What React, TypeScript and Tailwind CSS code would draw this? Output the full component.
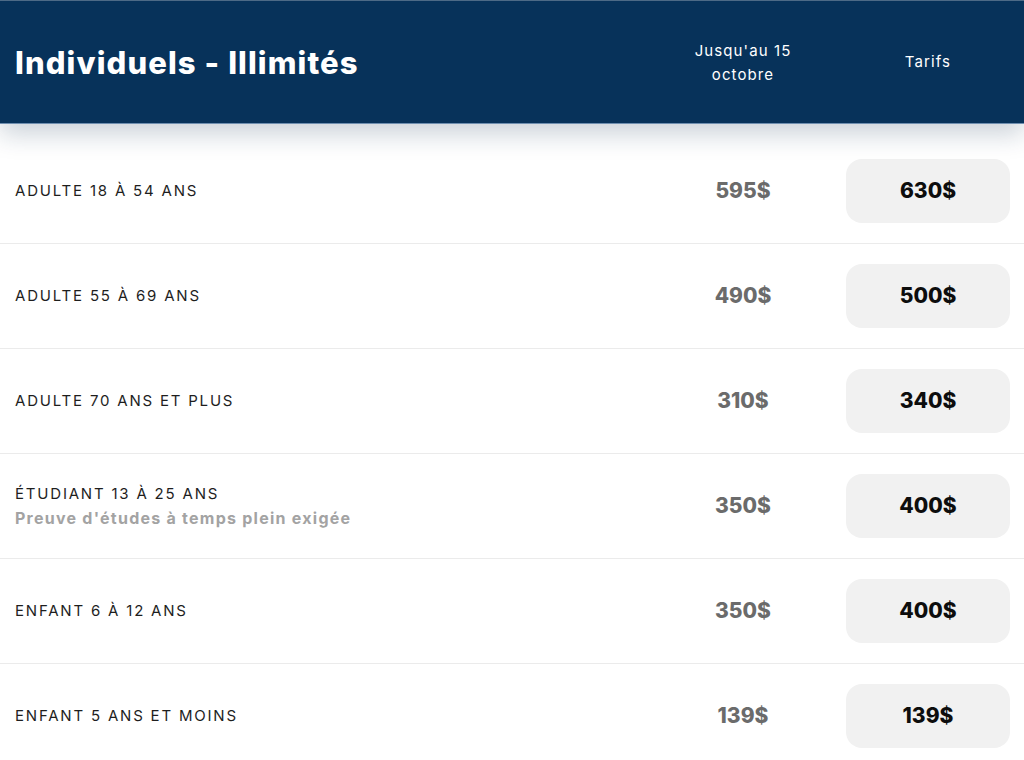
import React from "react";

const rows = [
  { label: "ADULTE 18 À 54 ANS", early: "595$", price: "630$" },
  { label: "ADULTE 55 À 69 ANS", early: "490$", price: "500$" },
  { label: "ADULTE 70 ANS ET PLUS", early: "310$", price: "340$" },
  { label: "ÉTUDIANT 13 À 25 ANS", sub: "Preuve d'études à temps plein exigée", early: "350$", price: "400$" },
  { label: "ENFANT 6 À 12 ANS", early: "350$", price: "400$" },
  { label: "ENFANT 5 ANS ET MOINS", early: "139$", price: "139$" },
];

export default function App() {
  return (
    <div className="w-[1024px] h-[760px] overflow-hidden bg-white font-['Inter',sans-serif]">
      <div className="relative z-10 h-[124px] bg-[#07325a] border-t border-[#4d6a86] border-b border-b-[#6f8fb0] shadow-[0_10px_24px_rgba(20,50,80,0.22)] grid grid-cols-[1fr_164px_164px] gap-x-[21px] pl-[15px] pr-[14px] items-center text-white">
        <div className="text-[31px] font-extrabold leading-none tracking-[1.1px]">Individuels - Illimités</div>
        <div className="text-center text-[15px] leading-[24px] tracking-[1.1px] pt-[2px]">
          Jusqu'au 15
          <br />
          octobre
        </div>
        <div className="text-center text-[15px] leading-[24px] tracking-[1.1px]">Tarifs</div>
      </div>
      <div className="pt-[15px]">
        {rows.map((r) => (
          <div
            key={r.label}
            className="h-[105px] border-b border-[#ebebeb] grid grid-cols-[1fr_164px_164px] gap-x-[21px] pl-[15px] pr-[14px] items-center"
          >
            <div className={r.sub ? "pb-[1px]" : ""}>
              <div className="text-[15px] leading-[24px] tracking-[1.8px] text-[#1e1e1e]">{r.label}</div>
              {r.sub && (
                <div className="text-[16px] leading-[24px] font-bold tracking-[1.25px] text-[#a3a3a3]">{r.sub}</div>
              )}
            </div>
            <div className="text-center text-[21px] font-extrabold text-[#6b6b6b]">{r.early}</div>
            <div className="h-[64px] rounded-[16px] bg-[#f1f1f1] flex items-center justify-center text-[21px] font-extrabold text-[#0d0d0d]">
              {r.price}
            </div>
          </div>
        ))}
      </div>
    </div>
  );
}
